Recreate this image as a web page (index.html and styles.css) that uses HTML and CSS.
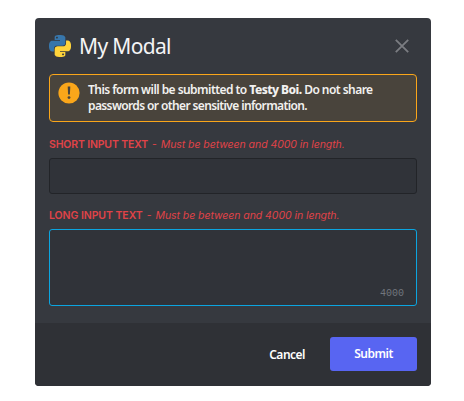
FILE: index.html
```html
<!DOCTYPE html>
<html lang="en">
<head>
<meta charset="utf-8">
<title>My Modal</title>
<link rel="stylesheet" href="styles.css">
</head>
<body>
<form class="modal">
  <header class="header">
    <svg class="logo" viewBox="0 0 24 24" aria-hidden="true">
      <defs>
        <path id="snake" fill-rule="evenodd" d="M14.25.18l.9.2.73.26.59.3.45.32.34.34.25.34.16.33.1.3.04.26.02.2-.01.13V8.5l-.05.63-.13.55-.21.46-.26.38-.3.31-.33.25-.35.19-.35.14-.33.1-.3.07-.26.04-.21.02H8.77l-.69.05-.59.14-.5.22-.41.27-.33.32-.27.35-.2.36-.15.37-.1.35-.07.32-.04.27-.02.21v3.06H3.17l-.21-.03-.28-.07-.32-.12-.35-.18-.36-.26-.36-.36-.35-.46-.32-.59-.28-.73-.21-.88-.14-1.05-.05-1.23.06-1.22.16-1.04.24-.87.32-.71.36-.57.4-.44.42-.33.42-.24.4-.16.36-.1.32-.05.24-.01h.16l.06.01h8.16v-.83H6.18l-.01-2.75-.02-.37.05-.34.11-.31.17-.28.25-.26.31-.23.38-.2.44-.18.51-.15.58-.12.64-.1.71-.06.77-.04.84-.02 1.27.05zm-6.3 1.98l-.23.33-.08.41.08.41.23.34.33.22.41.09.41-.09.33-.22.23-.34.08-.41-.08-.41-.23-.33-.33-.22-.41-.09-.41.09z"/>
      </defs>
      <use href="#snake" fill="#3776ab"/>
      <use href="#snake" fill="#ffd43b" transform="rotate(180 12 12)"/>
    </svg>
    <h1 class="title">My Modal</h1>
    <svg class="close" viewBox="0 0 14 14" aria-hidden="true"><path d="M.8.8l12.4 12.4M13.2.8L.8 13.2"/></svg>
  </header>
  <div class="notice">
    <svg class="warn" viewBox="0 0 22 22" aria-hidden="true">
      <circle cx="11" cy="11" r="10.6" fill="#faa61a"/>
      <path d="M9.7 4.5h2.6l-.4 8h-1.8z" fill="#4a443c"/>
      <circle cx="11" cy="15.6" r="1.4" fill="#4a443c"/>
    </svg>
    <p class="notice-text"><span class="line-one">This form will be submitted to <b>Testy Boi.</b> Do not share</span><br><span class="line-two">passwords or other sensitive information.</span></p>
  </div>
  <div class="label label-short"><span class="name">SHORT INPUT TEXT</span><span class="dash">-</span><em class="error">Must be between and 4000 in length.</em></div>
  <div class="field"></div>
  <div class="label label-long"><span class="name">LONG INPUT TEXT</span><span class="dash">-</span><em class="error">Must be between and 4000 in length.</em></div>
  <div class="field area"><span class="count">4000</span></div>
  <footer class="footer">
    <span class="cancel">Cancel</span>
    <span class="submit">Submit</span>
  </footer>
</form>
</body>
</html>
```
FILE: styles.css
```css
* { box-sizing: border-box; }
body { margin: 0; background: #fff; }
.modal {
  display: flex;
  flex-direction: column;
  width: 396px;
  height: 368px;
  margin: 18px 0 0 35px;
  border-radius: 4px;
  overflow: hidden;
  background: #36393f;
  font-family: "Noto Sans", sans-serif;
}
.header {
  display: flex;
  align-items: center;
  height: 56px;
  padding: 0 22px 0 14px;
}
.logo { width: 22px; height: 22px; }
.title {
  margin: 0 auto 0 8px;
  color: #f4f4f5;
  font-size: 21px;
  line-height: 28px;
  font-weight: 400;
  letter-spacing: -.65px;
}
.close { width: 14px; height: 14px; fill: none; stroke: #7b7d82; stroke-width: 1.8; }
.notice {
  display: flex;
  height: 48px;
  margin: 0 14px;
  padding: 7px 8px;
  border: 1px solid #faa61a;
  border-radius: 4px;
  background: #49443c;
}
.warn { width: 22px; height: 22px; flex: none; }
.notice-text {
  margin: 0 0 0 8px;
  color: #f2f1ef;
  font-size: 12px;
  line-height: 16px;
  font-weight: 600;
  white-space: nowrap;
}
.notice-text b { font-weight: 800; }
.line-one { letter-spacing: -.55px; }
.line-two { letter-spacing: -.62px; }
.label {
  display: flex;
  height: 14px;
  margin-left: 14px;
  color: #e04348;
  font: 400 10.5px/14px Inter, sans-serif;
  white-space: nowrap;
}
.label-short { margin-top: 16px; }
.label-long { margin-top: 15px; }
.name { font-weight: 600; letter-spacing: -.16px; }
.label-long .name { letter-spacing: -.06px; }
.dash { margin: 0 4px; }
.error { font-style: italic; letter-spacing: -.06px; }
.field {
  height: 36px;
  margin: 6px 14px 0;
  border: 1px solid #222428;
  border-radius: 3px;
  background: #303339;
}
.area {
  display: flex;
  align-items: flex-end;
  justify-content: flex-end;
  height: 77px;
  padding: 0 12px 4px 0;
  border-color: #0ba5e0;
}
.count { color: #72767d; font: 10px/14px "Liberation Mono", monospace; }
.footer {
  display: flex;
  align-items: center;
  justify-content: flex-end;
  height: 63px;
  margin-top: auto;
  padding: 0 14px 1px;
  background: #2f3136;
  color: #fff;
  font-size: 12px;
  font-weight: 600;
  letter-spacing: -.5px;
}
.cancel { margin-right: 25px; }
.submit {
  width: 87px;
  height: 34px;
  border-radius: 3px;
  background: #5865f2;
  text-align: center;
  line-height: 34px;
}
```
